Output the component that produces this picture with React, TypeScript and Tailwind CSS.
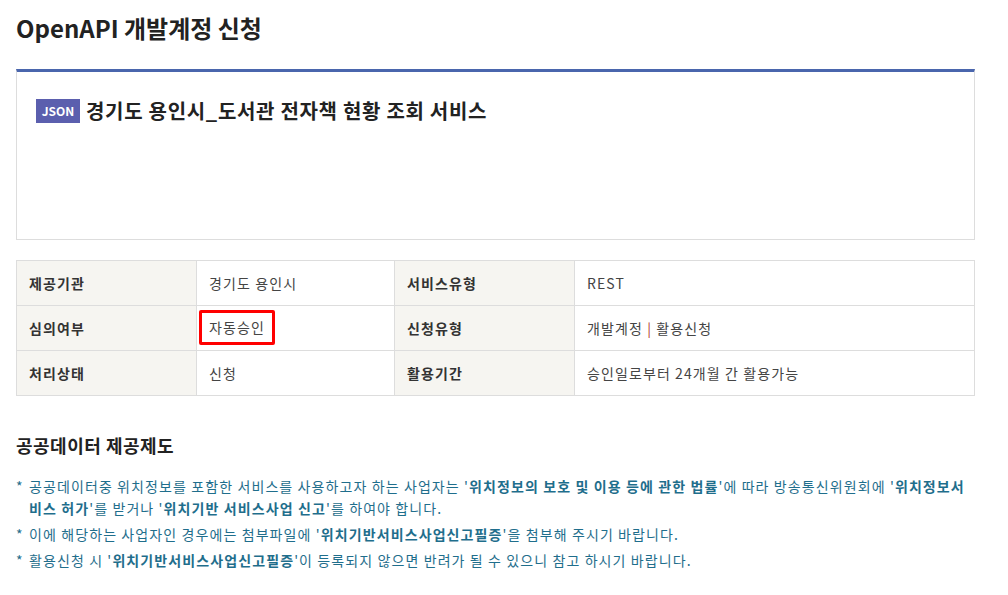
const rows = [
  { l1: '제공기관', v1: '경기도 용인시', l2: '서비스유형', v2: 'REST' },
  { l1: '심의여부', v1: '자동승인', l2: '신청유형', v2: '개발계정 | 활용신청' },
  { l1: '처리상태', v1: '신청', l2: '활용기간', v2: '승인일로부터 24개월 간 활용가능' },
]

function InfoTable() {
  return (
    <table className="mt-[20px] w-[959px] table-fixed border-collapse border border-[#dddddd] text-[14px] tracking-[1.1px]">
      <colgroup>
        <col className="w-[180px]" />
        <col className="w-[198px]" />
        <col className="w-[180px]" />
        <col />
      </colgroup>
      <tbody>
        {rows.map((r, i) => (
          <tr key={r.l1} className="h-[45px] border-b border-[#dddddd]">
            <th className="bg-[#f6f5f1] pl-3 text-left font-bold text-[#333333]">{r.l1}</th>
            <td className="border-x border-[#dddddd] pl-3 text-[#444444]">
              {i === 1 ? (
                <span className="-ml-[10px] -mt-[2px] inline-block rounded-[2px] border-[3px] border-[#ff0000] px-[7px] py-[4px] align-middle">
                  {r.v1}
                </span>
              ) : (
                r.v1
              )}
            </td>
            <th className="bg-[#f6f5f1] pl-3 text-left font-bold text-[#333333]">{r.l2}</th>
            <td className="border-l border-[#dddddd] pl-3 text-[#444444]">
              {i === 1 ? (
                <>
                  개발계정 <span className="text-[#b03a2e]">|</span> 활용신청
                </>
              ) : (
                r.v2
              )}
            </td>
          </tr>
        ))}
      </tbody>
    </table>
  )
}

export default function App() {
  return (
    <div
      className="min-h-[595px] bg-white px-4 pt-[12px] text-[#333333]"
      style={{ fontFamily: '"Malgun Gothic", "Noto Sans CJK KR", "Noto Sans", sans-serif' }}
    >
      <h1 className="text-[24px] font-bold leading-[32px] text-[#222222]">OpenAPI 개발계정 신청</h1>

      <div className="mt-[25px] h-[171px] w-[959px] border border-t-[3px] border-[#dddddd] border-t-[#4a66ad] px-[19px] pt-[24px]">
        <div className="flex items-center gap-[6px]">
          <span className="flex h-[24px] w-[44px] items-center justify-center bg-[#5b5fae] text-[12px] font-bold text-white">
            JSON
          </span>
          <span className="text-[20px] font-bold tracking-[0.7px] text-[#222222]">
            경기도 용인시_도서관 전자책 현황 조회 서비스
          </span>
        </div>
      </div>

      <InfoTable />

      <h2 className="mt-[36px] text-[18px] font-bold leading-[26px] tracking-[0.5px] text-[#222222]">공공데이터 제공제도</h2>

      <ul className="mt-[17px] w-[960px] space-y-[4px] text-[14px] leading-[22px] tracking-[1.1px] text-[#1f6e8c]">
        <li className="flex">
          <span className="w-[13px] shrink-0">*</span>
          <span>
            공공데이터중 위치정보를 포함한 서비스를 사용하고자 하는 사업자는 '<b>위치정보의 보호 및 이용 등에 관한 법률</b>'에 따라
            방송통신위원회에 '<b>위치정보서비스 허가</b>'를 받거나 '<b>위치기반 서비스사업 신고</b>'를 하여야 합니다.
          </span>
        </li>
        <li className="flex">
          <span className="w-[13px] shrink-0">*</span>
          <span>
            이에 해당하는 사업자인 경우에는 첨부파일에 '<b>위치기반서비스사업신고필증</b>'을 첨부해 주시기 바랍니다.
          </span>
        </li>
        <li className="flex">
          <span className="w-[13px] shrink-0">*</span>
          <span>
            활용신청 시 '<b>위치기반서비스사업신고필증</b>'이 등록되지 않으면 반려가 될 수 있으니 참고 하시기 바랍니다.
          </span>
        </li>
      </ul>
    </div>
  )
}
